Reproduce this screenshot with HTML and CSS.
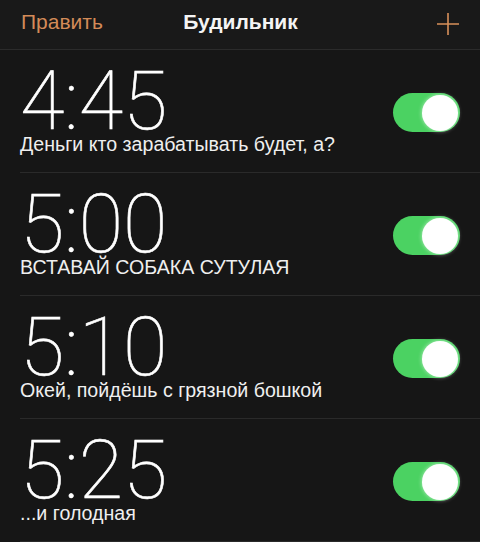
FILE: index.html
```html
<!DOCTYPE html>
<html lang="ru">
<head>
<meta charset="utf-8">
<link rel="stylesheet" href="styles.css">
</head>
<body>
<div class="screen">
  <header class="bar">
    <span class="edit">Править</span>
    <span class="title">Будильник</span>
    <span class="add">
      <svg width="24" height="24" viewBox="0 0 24 24"><path d="M12 1V23M1 12H23" stroke="#d8905a" stroke-width="1.6" fill="none"/></svg>
    </span>
  </header>
  <ul class="list">
    <li class="alarm">
      <div class="info"><div class="time">4:45</div><div class="label">Деньги кто зарабатывать будет, а?</div></div>
      <span class="toggle"><span class="knob"></span></span>
    </li>
    <li class="alarm">
      <div class="info"><div class="time">5:00</div><div class="label">ВСТАВАЙ СОБАКА СУТУЛАЯ</div></div>
      <span class="toggle"><span class="knob"></span></span>
    </li>
    <li class="alarm">
      <div class="info"><div class="time">5:10</div><div class="label">Окей, пойдёшь с грязной бошкой</div></div>
      <span class="toggle"><span class="knob"></span></span>
    </li>
    <li class="alarm">
      <div class="info"><div class="time">5:25</div><div class="label">...и голодная</div></div>
      <span class="toggle"><span class="knob"></span></span>
    </li>
  </ul>
</div>
</body>
</html>
```
FILE: styles.css
```css
html, body {
  margin: 0;
  padding: 0;
  background: #161616;
}
.screen {
  width: 480px;
  height: 542px;
  overflow: hidden;
  background: #161616;
  font-family: "Liberation Sans", Arial, sans-serif;
  color: #f2f2f2;
}
.bar {
  height: 50px;
  box-sizing: border-box;
  display: grid;
  grid-template-columns: 1fr auto 1fr;
  align-items: center;
  padding: 0 20px 5px 21px;
  border-bottom: 1px solid #2b2b2b;
  background: #191919;
}
.edit {
  color: #d38b58;
  font-size: 21px;
}
.title {
  font-weight: bold;
  font-size: 21px;
  color: #f4f4f4;
}
.add {
  justify-self: end;
  display: flex;
  padding-top: 3px;
}
.list {
  list-style: none;
  margin: 0;
  padding: 0 0 0 20px;
}
.alarm {
  height: 123px;
  box-sizing: border-box;
  border-bottom: 1px solid #2a2a2a;
  display: flex;
  justify-content: space-between;
  align-items: flex-start;
  padding: 12px 20px 0 0;
}
.time {
  font-family: Roboto, sans-serif;
  font-weight: 100;
  font-size: 81px;
  line-height: 80px;
  -webkit-text-stroke: 0.6px #ffffff;
  color: #ffffff;
}
.label {
  font-size: 19.6px;
  line-height: 22px;
  margin-top: -9px;
  color: #efefef;
}
.toggle {
  margin-top: 31px;
  width: 67px;
  height: 39px;
  border-radius: 20px;
  background: #4bd262;
  display: flex;
  justify-content: flex-end;
  align-items: center;
  padding: 2px;
  box-sizing: border-box;
}
.knob {
  width: 36px;
  height: 36px;
  border-radius: 50%;
  background: #ffffff;
  box-shadow: 0 0 4px rgba(255,255,255,0.6);
}
```
